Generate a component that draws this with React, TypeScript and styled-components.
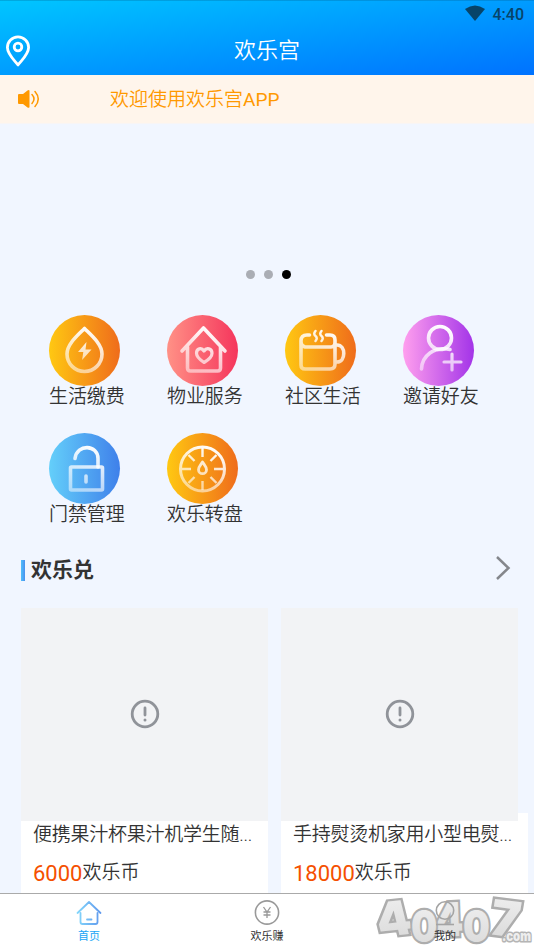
import React from 'react';
import styled, { createGlobalStyle } from 'styled-components';

const Global = createGlobalStyle`
  * { box-sizing: border-box; }
  body { margin: 0; overflow: hidden; background: #f0f5ff; }
  svg { display: block; }
`;

const Screen = styled.div`
  width: 534px;
  height: 949px;
  display: flex;
  flex-direction: column;
  overflow: hidden;
  background: #f1f6ff;
  color: #333;
  font-family: Roboto, 'Noto Sans CJK SC', sans-serif;
  font-size: 19px;
`;

const Header = styled.header`
  height: 75px;
  flex: none;
  background: linear-gradient(to bottom right, #00c6ff, #0072ff);
  box-shadow: inset 0 1px 0 rgba(0, 70, 110, 0.22);
`;

const StatusBar = styled.div`
  height: 28px;
  display: flex;
  align-items: center;
  justify-content: flex-end;
  gap: 8px;
  padding-right: 10px;
  color: #074469;
  font-size: 16px;
  font-weight: 500;
`;

const WifiIcon = styled.svg`
  margin-bottom: 3px;
`;

const TitleBar = styled.div`
  height: 47px;
  display: grid;
  grid-template-columns: 44px 1fr 44px;
  align-items: center;
  padding: 0 0 1px 5px;
`;

const Title = styled.h1`
  margin: 0;
  font-size: 22px;
  line-height: 30px;
  font-weight: 350;
  color: #fff;
  text-align: center;
  padding-right: 5px;
`;

const Notice = styled.div`
  height: 49px;
  flex: none;
  display: flex;
  align-items: center;
  gap: 70px;
  padding: 0 0 0 17px;
  background: #fff5eb;
  color: #ff9900;
  border-bottom: 1px solid #f8f5f5;
`;

const NoticeText = styled.span`
  line-height: 24px;
  padding-top: 2px;
  font-weight: 350;
`;

const Latin = styled.span`
  font-weight: 400;
`;

const Banner = styled.div`
  height: 191px;
  flex: none;
  display: flex;
  align-items: flex-end;
  justify-content: center;
  gap: 9px;
  padding: 0 0 36px 2px;
`;

const Dot = styled.i<{ $active?: boolean }>`
  width: 9px;
  height: 9px;
  border-radius: 50%;
  background: ${(p) => (p.$active ? '#000' : '#aaadb4')};
`;

const Services = styled.div`
  flex: none;
  display: grid;
  grid-template-columns: repeat(4, 118px);
  grid-auto-rows: 117.5px;
  padding-left: 49px;
`;

const Service = styled.div`
  display: flex;
  flex-direction: column;
`;

const Disc = styled.div<{ $from: string; $to: string }>`
  width: 71px;
  height: 71px;
  border-radius: 50%;
  background: linear-gradient(90deg, ${(p) => p.$from}, ${(p) => p.$to});
`;

const Label = styled.span`
  line-height: 22px;
  letter-spacing: -0.1px;
  font-weight: 350;
  white-space: nowrap;
`;

const Section = styled.div`
  height: 58px;
  flex: none;
  display: flex;
  align-items: center;
  justify-content: space-between;
  padding: 0 23px 18px 21px;
`;

const Heading = styled.h2`
  margin: 0;
  display: flex;
  align-items: center;
  gap: 6px;
  font-size: 21px;
  line-height: 28px;
  font-weight: 700;

  &::before {
    content: '';
    width: 4px;
    height: 21px;
    background: linear-gradient(90deg, #4fc0fb, #4a90ee);
  }
`;

const Chevron = styled.svg`
  margin-bottom: 5px;
`;

const Products = styled.div`
  flex: 1;
  min-height: 0;
  display: flex;
  gap: 13px;
  padding-left: 21px;
  overflow: hidden;
`;

const Product = styled.article`
  width: 247px;
  flex: none;
  font-weight: 350;
  background: linear-gradient(#fff, #fff) 0 205px no-repeat;
`;

const Photo = styled.div<{ $width: number }>`
  width: ${(p) => p.$width}px;
  height: 213px;
  display: grid;
  place-items: center;
  padding-bottom: 2px;
  background: #f2f3f5;
`;

const Name = styled.div`
  padding-left: 12px;
  margin-top: 1px;
  line-height: 26px;
  letter-spacing: -0.25px;
  white-space: nowrap;
`;

const Price = styled.div`
  display: flex;
  align-items: center;
  padding: 11px 0 0 12px;
  line-height: 24px;
`;

const Amount = styled.span`
  color: #f55000;
  font-size: 22px;
  font-weight: 400;
  padding-top: 3px;
`;

const Tabs = styled.nav`
  position: relative;
  height: 56px;
  flex: none;
  display: grid;
  grid-template-columns: repeat(3, 1fr);
  background: #fff;
  border-top: 1px solid #aaa;
`;

const Tab = styled.div<{ $active?: boolean }>`
  z-index: 1;
  display: flex;
  flex-direction: column;
  align-items: center;
  padding-top: 5px;
  font-size: 11px;
  line-height: 16px;
  gap: 3px;
  color: ${(p) => (p.$active ? '#20a5f5' : '#333')};
`;

const Watermark = styled.svg`
  position: absolute;
  right: 0;
  bottom: 0;
  z-index: 0;
`;

const ServiceIcon = ({ id, children }: { id: string; children: React.ReactNode }) => (
  <svg width="71" height="71" viewBox="0 0 71 71" fill="none" stroke={`url(#${id})`} strokeWidth="3.6" strokeLinecap="round" strokeLinejoin="round">
    <defs>
      <linearGradient id={id} gradientUnits="userSpaceOnUse" x1="43" y1="12" x2="24" y2="59">
        <stop stopColor="#fff" />
        <stop offset="1" stopColor="#fff" stopOpacity=".5" />
      </linearGradient>
    </defs>
    {children}
  </svg>
);

const services = [
  {
    label: '生活缴费', from: '#ffc812', to: '#ef6c1b', icon: (
      <>
        <path d="M35.5 13.5C29 20 18 29 18 39a17.500 17.500 0 0 0 35 0C53 29 42 20 35.500 13.500Z" />
        <path d="M37.500 27 29 37h5.300l-1.200 8L42.500 34.500h-6Z" fill="url(#s0)" stroke="none" />
      </>
    ),
  },
  {
    label: '物业服务', from: '#ff9186', to: '#f5355c', icon: (
      <>
        <path d="M15 36 36.500 13 58 36M20.500 32v21q0 3 3 3h27q3 0 3-3V32" />
        <path d="M37 47.500c-3-2-7.500-5-7.500-9.200 0-5 5-6 7.500-2.300 2.500-3.700 8-2.700 8 2.300 0 4.200-4.500 7.200-8 9.200Z" strokeWidth="3.200" />
      </>
    ),
  },
  {
    label: '社区生活', from: '#ffc812', to: '#ef6c1b', icon: (
      <>
        <path d="M24.500 20h-2.500q-6 0-6 6v24q0 4 4 4h25q5 0 5-5V25q0-5-5-5h-3.500M16 27q0 4 4 5h26q4 0 4-5M51 30h1c9 0 9 17 0 17h-1" />
        <path d="M30.500 16q-2.500 3 0 5t0 5M36.500 16q-2.500 3 0 5t0 5" strokeWidth="2.500" />
      </>
    ),
  },
  {
    label: '邀请好友', from: '#ff9fee', to: '#a334e8', icon: (
      <>
        <circle cx="37" cy="23" r="11.500" />
        <path d="M18.500 54C19 41 31 31 47 34.500" />
        <path d="M49 39v16M41 47h17" strokeWidth="3.200" />
      </>
    ),
  },
  {
    label: '门禁管理', from: '#64cffa', to: '#3f80ea', icon: (
      <>
        <path d="M26 25.500c2-15 23-14 23 0V34" />
        <rect x="21.500" y="34" width="32" height="23" rx="1" />
        <path d="M37 43v6" />
      </>
    ),
  },
  {
    label: '欢乐转盘', from: '#ffc812', to: '#ef6c1b', icon: (
      <>
        <circle cx="35.500" cy="36" r="22" strokeWidth="3" />
        <g strokeWidth="2.400" strokeLinecap="butt">
          <path d="M35.500 15v9M35.500 48v9M15 36h9M47 36h9M21.500 22l6 6M49.500 22l-6 6M21.500 50l6-6M49.500 50l-6-6" />
        </g>
        <path d="M35.500 29c-2 3-4 5-4 7.700a4 4 0 0 0 8 0c0-2.700-2-4.700-4-7.700Z" strokeWidth="2.800" />
      </>
    ),
  },
];

const products = [
  { name: '便携果汁杯果汁机学生随...', price: '6000', width: 247 },
  { name: '手持熨烫机家用小型电熨...', price: '18000', width: 237 },
];

const digits: [string, string][] = [
  ['4', 'matrix(1.12 -.12 .26 1.05 10 46)'],
  ['4', 'matrix(.94 -.04 .04 1.06 65 46)'],
  ['0', 'matrix(.84 0 0 1 41 51)'],
  ['0', 'matrix(.86 0 0 1 93 51)'],
  ['7', 'matrix(1.12 .14 -.18 1.1 118 43)'],
];

export default function App() {
  return (
    <>
      <Global />
      <Screen>
        <Header>
          <StatusBar>
            <WifiIcon width="20" height="16" viewBox="0 0 20 16">
              <path d="M0 4Q10-3 20 4L10 16Z" fill="#074469" />
            </WifiIcon>
            4:40
          </StatusBar>
          <TitleBar>
            <svg width="26" height="32" viewBox="0 0 26 32" fill="none" stroke="#fff" strokeWidth="2.800">
              <path d="M13 30C9 25 2.400 19 2.400 12.500a10.600 10.600 0 0 1 21.200 0C23.600 19 17 25 13 30Z" strokeLinejoin="round" />
              <circle cx="13" cy="12" r="3.800" />
            </svg>
            <Title>欢乐宫</Title>
          </TitleBar>
        </Header>

        <Notice>
          <svg width="23" height="18" viewBox="0 0 23 18" fill="none" stroke="#ff9900" strokeWidth="1.500" strokeLinecap="round">
            <path d="M1 5Q1 4 2 4h4l4.500-3.500Q12.500-.5 12.500 1v16q0 1.300-2 .5L6 14H2q-1 0-1-1Z" fill="#ff9900" stroke="none" />
            <path d="M15 4.500q4 4.500 0 9M18 1.500q6.500 7.500 0 15" />
          </svg>
          <NoticeText>欢迎使用欢乐宫<Latin>APP</Latin></NoticeText>
        </Notice>

        <Banner>
          <Dot />
          <Dot />
          <Dot $active />
        </Banner>

        <Services>
          {services.map((s, i) => (
            <Service key={s.label}>
              <Disc $from={s.from} $to={s.to}>
                <ServiceIcon id={`s${i}`}>{s.icon}</ServiceIcon>
              </Disc>
              <Label>{s.label}</Label>
            </Service>
          ))}
        </Services>

        <Section>
          <Heading>欢乐兑</Heading>
          <Chevron width="16" height="26" viewBox="0 0 16 26" fill="none" stroke="#85878c" strokeWidth="2.500">
            <path d="M2 2 13.500 13 2 24" />
          </Chevron>
        </Section>

        <Products>
          {products.map((p) => (
            <Product key={p.name}>
              <Photo $width={p.width}>
                <svg width="30" height="30" viewBox="0 0 30 30" fill="none" stroke="#909399" strokeWidth="2.800">
                  <circle cx="15" cy="15" r="12.800" />
                  <path d="M15 9v7" strokeLinecap="round" />
                  <circle cx="15" cy="21" r="1.500" fill="#909399" stroke="none" />
                </svg>
              </Photo>
              <Name>{p.name}</Name>
              <Price>
                <Amount>{p.price}</Amount>欢乐币
              </Price>
            </Product>
          ))}
        </Products>

        <Tabs>
          <Watermark width="164" height="58" viewBox="0 0 164 58" fontFamily="Inter, sans-serif" fontWeight="900">
            <defs>
              <linearGradient id="silver" x1="0" y1="0" x2="0" y2="1">
                <stop stopColor="#f0f0f0" />
                <stop offset="1" stopColor="#d8d8d8" />
              </linearGradient>
            </defs>
            <g fontSize="44" fill="url(#silver)" stroke="#adadad" strokeWidth="4.500" paintOrder="stroke" strokeLinejoin="miter">
              {digits.map(([d, m], i) => (
                <text key={i} transform={m}>{d}</text>
              ))}
            </g>
            <text x="132" y="50" fontSize="14" textLength="29" lengthAdjust="spacingAndGlyphs" fill="#eee" stroke="#b5b5b5" strokeWidth="3" paintOrder="stroke" strokeLinejoin="round">.com</text>
          </Watermark>
          <Tab $active>
            <svg width="26" height="27" viewBox="0 0 26 27" fill="none" stroke="url(#home)" strokeWidth="1.800" strokeLinecap="round" strokeLinejoin="round">
              <defs>
                <linearGradient id="home">
                  <stop stopColor="#83d6fb" />
                  <stop offset="1" stopColor="#6099ed" />
                </linearGradient>
              </defs>
              <path d="M1.500 14 13 3l11.500 11M4.500 14v9q0 2 2 2h13q2 0 2-2v-9M11 20.500h4.500v.1" />
            </svg>
            首页
          </Tab>
          <Tab>
            <svg width="26" height="27" viewBox="0 0 26 27" fill="none" stroke="#999" strokeWidth="1.600">
              <circle cx="13" cy="13.500" r="11.600" />
              <path d="m9.500 8 3.500 5 3.500-5M13 13v6M9.500 13h7M9.500 16h7" strokeWidth="1.300" />
            </svg>
            欢乐赚
          </Tab>
          <Tab>
            <svg width="26" height="27" viewBox="0 0 26 27" fill="none" stroke="#a4a4a4" strokeWidth="1.600">
              <circle cx="13" cy="11.500" r="8.700" />
              <path d="M4 25.500h18" />
            </svg>
            我的
          </Tab>
        </Tabs>
      </Screen>
    </>
  );
}
